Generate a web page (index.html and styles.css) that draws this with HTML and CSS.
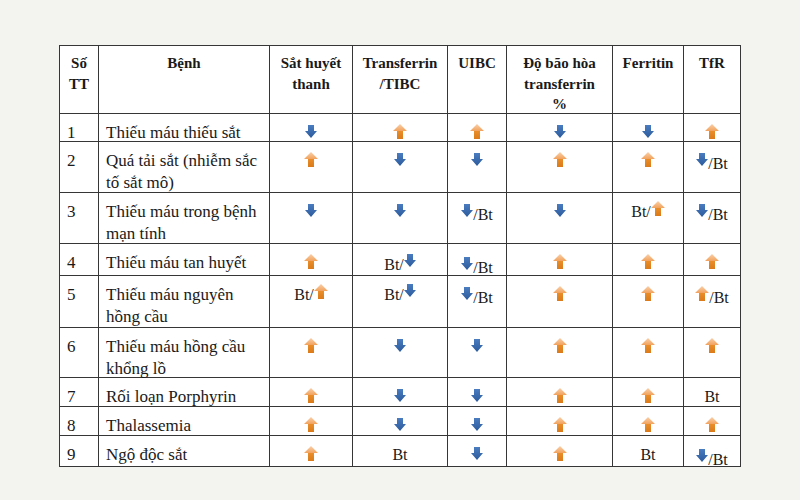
FILE: index.html
```html
<!DOCTYPE html>
<html lang="vi">
<head>
<meta charset="utf-8">
<title>Bảng xét nghiệm sắt</title>
<link rel="stylesheet" href="styles.css">
</head>
<body>
<svg class="defs" width="0" height="0" aria-hidden="true">
  <defs>
    <linearGradient id="gUp" x1="0" y1="0" x2="0" y2="1">
      <stop offset="0" stop-color="#fbd0a8"/>
      <stop offset="0.45" stop-color="#f2a460"/>
      <stop offset="0.5" stop-color="#e88c2a"/>
      <stop offset="1" stop-color="#db7a18"/>
    </linearGradient>
    <linearGradient id="gDown" x1="0" y1="0" x2="0" y2="1">
      <stop offset="0" stop-color="#4a7cc0"/>
      <stop offset="1" stop-color="#2c5b9c"/>
    </linearGradient>
    <symbol id="up" viewBox="0 0 14 15">
      <path d="M7 0 L14 7 H10 V15 H4 V7 H0 Z" fill="url(#gUp)"/>
    </symbol>
    <symbol id="down" viewBox="0 0 12 13">
      <path d="M3 0 H9 V6 H12 L6 13 L0 6 H3 Z" fill="url(#gDown)"/>
    </symbol>
  </defs>
</svg>

<div class="page">
  <div class="grid">
    <div class="th">Số<br>TT</div>
    <div class="th">Bệnh</div>
    <div class="th">Sắt huyết<br>thanh</div>
    <div class="th">Transferrin<br>/TIBC</div>
    <div class="th">UIBC</div>
    <div class="th">Độ bão hòa<br>transferrin<br>%</div>
    <div class="th">Ferritin</div>
    <div class="th">TfR</div>

    <div class="td num">1</div>
    <div class="td name">Thiếu máu thiếu sắt</div>
    <div class="td"><svg class="dn"><use href="#down"/></svg></div>
    <div class="td"><svg class="up"><use href="#up"/></svg></div>
    <div class="td"><svg class="up"><use href="#up"/></svg></div>
    <div class="td"><svg class="dn"><use href="#down"/></svg></div>
    <div class="td"><svg class="dn"><use href="#down"/></svg></div>
    <div class="td"><svg class="up"><use href="#up"/></svg></div>

    <div class="td num">2</div>
    <div class="td name">Quá tải sắt (nhiễm sắc<br>tố sắt mô)</div>
    <div class="td"><svg class="up"><use href="#up"/></svg></div>
    <div class="td"><svg class="dn"><use href="#down"/></svg></div>
    <div class="td"><svg class="dn"><use href="#down"/></svg></div>
    <div class="td"><svg class="up"><use href="#up"/></svg></div>
    <div class="td"><svg class="up"><use href="#up"/></svg></div>
    <div class="td"><svg class="dn"><use href="#down"/></svg><span class="bt">/Bt</span></div>

    <div class="td num">3</div>
    <div class="td name">Thiếu máu trong bệnh<br>mạn tính</div>
    <div class="td"><svg class="dn"><use href="#down"/></svg></div>
    <div class="td"><svg class="dn"><use href="#down"/></svg></div>
    <div class="td"><svg class="dn"><use href="#down"/></svg><span class="bt">/Bt</span></div>
    <div class="td"><svg class="dn"><use href="#down"/></svg></div>
    <div class="td"><span class="bt">Bt/</span><svg class="up"><use href="#up"/></svg></div>
    <div class="td"><svg class="dn"><use href="#down"/></svg><span class="bt">/Bt</span></div>

    <div class="td num">4</div>
    <div class="td name">Thiếu máu tan huyết</div>
    <div class="td"><svg class="up"><use href="#up"/></svg></div>
    <div class="td low"><span class="bt">Bt/</span><svg class="dn"><use href="#down"/></svg></div>
    <div class="td low"><svg class="dn"><use href="#down"/></svg><span class="bt">/Bt</span></div>
    <div class="td"><svg class="up"><use href="#up"/></svg></div>
    <div class="td"><svg class="up"><use href="#up"/></svg></div>
    <div class="td"><svg class="up"><use href="#up"/></svg></div>

    <div class="td num">5</div>
    <div class="td name">Thiếu máu nguyên<br>hồng cầu</div>
    <div class="td"><span class="bt">Bt/</span><svg class="up"><use href="#up"/></svg></div>
    <div class="td"><span class="bt">Bt/</span><svg class="dn"><use href="#down"/></svg></div>
    <div class="td"><svg class="dn"><use href="#down"/></svg><span class="bt">/Bt</span></div>
    <div class="td"><svg class="up"><use href="#up"/></svg></div>
    <div class="td"><svg class="up"><use href="#up"/></svg></div>
    <div class="td"><svg class="up"><use href="#up"/></svg><span class="bt">/Bt</span></div>

    <div class="td num">6</div>
    <div class="td name">Thiếu máu hồng cầu<br>khổng lồ</div>
    <div class="td"><svg class="up"><use href="#up"/></svg></div>
    <div class="td"><svg class="dn"><use href="#down"/></svg></div>
    <div class="td"><svg class="dn"><use href="#down"/></svg></div>
    <div class="td"><svg class="up"><use href="#up"/></svg></div>
    <div class="td"><svg class="up"><use href="#up"/></svg></div>
    <div class="td"><svg class="up"><use href="#up"/></svg></div>

    <div class="td num">7</div>
    <div class="td name">Rối loạn Porphyrin</div>
    <div class="td"><svg class="up"><use href="#up"/></svg></div>
    <div class="td"><svg class="dn"><use href="#down"/></svg></div>
    <div class="td"><svg class="dn"><use href="#down"/></svg></div>
    <div class="td"><svg class="up"><use href="#up"/></svg></div>
    <div class="td"><svg class="up"><use href="#up"/></svg></div>
    <div class="td"><span class="bt">Bt</span></div>

    <div class="td num">8</div>
    <div class="td name">Thalassemia</div>
    <div class="td"><svg class="up"><use href="#up"/></svg></div>
    <div class="td"><svg class="dn"><use href="#down"/></svg></div>
    <div class="td"><svg class="dn"><use href="#down"/></svg></div>
    <div class="td"><svg class="up"><use href="#up"/></svg></div>
    <div class="td"><svg class="up"><use href="#up"/></svg></div>
    <div class="td"><svg class="up"><use href="#up"/></svg></div>

    <div class="td num">9</div>
    <div class="td name">Ngộ độc sắt</div>
    <div class="td"><svg class="up"><use href="#up"/></svg></div>
    <div class="td"><span class="bt">Bt</span></div>
    <div class="td"><svg class="dn"><use href="#down"/></svg></div>
    <div class="td"><svg class="up"><use href="#up"/></svg></div>
    <div class="td"><span class="bt">Bt</span></div>
    <div class="td low"><svg class="dn"><use href="#down"/></svg><span class="bt">/Bt</span></div>
  </div>
</div>
</body>
</html>
```

FILE: styles.css
```css
html, body {
  margin: 0;
  padding: 0;
}
body {
  background: #f3f3f0;
  font-family: "Liberation Serif", "Times New Roman", serif;
  color: #1a1a1a;
  width: 800px;
  height: 500px;
  overflow: hidden;
}
.defs {
  display: block;
  width: 0;
  height: 0;
  overflow: hidden;
}
.page {
  padding: 45px 0 0 59px;
}
.grid {
  display: grid;
  width: 682px;
  box-sizing: border-box;
  grid-template-columns: 38px 170px 82px 94px 58px 105px 70px 56px;
  grid-template-rows: 67px 27px 50px 50px 31px 51px 49px 28px 28px 30px;
  gap: 1px;
  padding: 1px;
  background: #363636;
}
.th, .td {
  background: #fff;
  overflow: visible;
}
.th {
  font-weight: bold;
  font-size: 15px;
  line-height: 20.5px;
  text-align: center;
  padding-top: 7px;
}
.td {
  font-size: 17px;
  line-height: 22px;
  padding-top: 8px;
  display: flex;
  justify-content: center;
  align-items: flex-start;
}
.td.num {
  justify-content: flex-start;
  padding-left: 7px;
}
.td.name {
  display: block;
  padding-left: 7px;
  white-space: nowrap;
}
.td.low {
  padding-top: 10px;
}
.up {
  width: 14px;
  height: 15px;
  margin-top: 2px;
  flex: none;
}
.dn {
  width: 12px;
  height: 13px;
  margin-top: 3px;
  flex: none;
}
.bt {
  font-size: 16px;
  line-height: 22px;
}
.bt + svg {
  margin-top: 0;
}
svg + .bt {
  margin-top: 3px;
}
```
